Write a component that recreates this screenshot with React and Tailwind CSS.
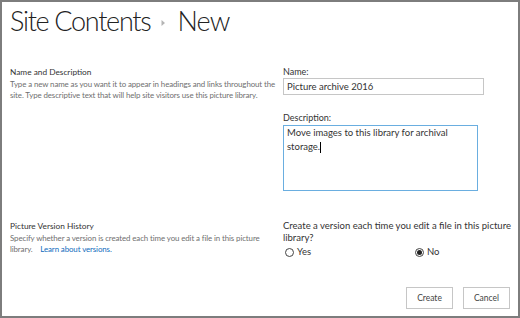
export default function App() {
  const font = { fontFamily: 'Lato, "Liberation Sans", sans-serif' };
  return (
    <div className="w-[520px] h-[318px] border-2 border-[#7d7d7d] bg-white text-[#333] flex flex-col" style={font}>
      <div className="flex items-center pl-[8px] h-[36px] pt-[1px]">
        <span className="text-[27px] font-light leading-none text-[#222] tracking-[-1.3px]">Site Contents</span>
        <svg width="6" height="8" viewBox="0 0 6 8" className="ml-[10px] mr-[11px] mt-[5px]"><path d="M1.5 1 L5 4 L1.5 7 Z" fill="#b5b5b5" /></svg>
        <span className="text-[27px] font-light leading-none text-[#222] tracking-[-0.8px]">New</span>
      </div>

      <div className="flex mt-[28px]">
        <div className="w-[273px] pl-[8px]">
          <div className="text-[8.3px] leading-[12px] text-[#333]">Name and Description</div>
          <div className="w-[268px] text-[7.9px] leading-[11px] text-[#6f6f6f] mt-[0.5px] tracking-[-0.1px]">Type a new name as you want it to appear in headings and links throughout the site. Type descriptive text that will help site visitors use this picture library.</div>
        </div>
        <div className="pl-[8px] flex flex-col">
          <div className="text-[9px] leading-[12px] text-[#333]">Name:</div>
          <div className="w-[201px] h-[17px] border border-[#c6c6c6] px-[3px] text-[9.5px] leading-[15px] text-[#333]">Picture archive 2016</div>
          <div className="text-[9px] leading-[12px] text-[#333] mt-[17px]">Description:</div>
          <div className="w-[195px] h-[66px] border border-[#6aaee0] mt-[1px] px-[3px] text-[9.5px] leading-[14px] text-[#333]">
            Move images to this library for archival storage.<span className="inline-block w-[1px] h-[11px] bg-black align-middle"></span>
          </div>
        </div>
      </div>

      <div className="flex mt-[29px]">
        <div className="w-[273px] pl-[8px]">
          <div className="text-[8.3px] leading-[12px] text-[#333]">Picture Version History</div>
          <div className="w-[262px] text-[7.9px] leading-[11px] text-[#6f6f6f] mt-[0.5px] tracking-[-0.1px]">Specify whether a version is created each time you edit a file in this picture library.&nbsp;&nbsp;&nbsp; <span className="text-[#0f6cbd]">Learn about versions.</span></div>
        </div>
        <div className="pl-[8px] flex flex-col">
          <div className="w-[232px] text-[9.5px] leading-[12px] text-[#333]">Create a version each time you edit a file in this picture library?</div>
          <div className="flex items-center mt-[2px] text-[9.5px] text-[#333] leading-[12px]">
            <div className="w-[132px] flex items-center pl-[2px]">
              <span className="w-[9px] h-[9px] rounded-full border border-[#444] inline-block mr-[3px]"></span>
              <span>Yes</span>
            </div>
            <div className="flex items-center">
              <span className="w-[9px] h-[9px] rounded-full border border-[#444] inline-flex items-center justify-center mr-[3px]">
                <span className="w-[5px] h-[5px] rounded-full bg-[#222]"></span>
              </span>
              <span>No</span>
            </div>
          </div>
        </div>
      </div>

      <div className="flex justify-end gap-[10px] pr-[8px] mt-auto mb-[7px]">
        <button className="w-[47px] h-[22px] border border-[#c6c6c6] bg-white text-[8.5px] text-[#444]">Create</button>
        <button className="w-[47px] h-[22px] border border-[#c6c6c6] bg-white text-[8.5px] text-[#444]">Cancel</button>
      </div>
    </div>
  );
}
